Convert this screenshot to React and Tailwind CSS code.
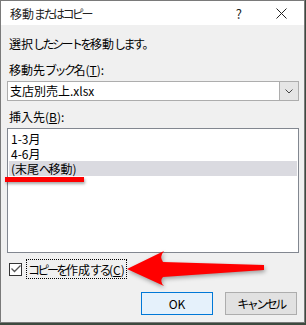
function J({ t }) {
  const parts = [];
  let buf = '';
  let kind = null;
  const kindOf = (c) => (c === '。' ? 'p' : /[\u3040-\u30ff]/.test(c) ? 'k' : 'o');
  for (const c of t) {
    const k = kindOf(c);
    if (k !== kind && buf) {
      parts.push([kind, buf]);
      buf = '';
    }
    kind = k;
    buf += c;
  }
  if (buf) parts.push([kind, buf]);
  return (
    <>
      {parts.map(([k, s], i) =>
        k === 'k' ? (
          <span key={i} className="tracking-[-2.5px]">{s}</span>
        ) : k === 'p' ? (
          <span key={i} className="tracking-[-4px]">{s}</span>
        ) : (
          <span key={i}>{s}</span>
        )
      )}
    </>
  );
}

export default function App() {
  const font = { fontFamily: '"Noto Sans CJK JP", "Noto Sans", sans-serif' };
  return (
    <div className="relative w-[306px] h-[325px] bg-[#3d4a3f] overflow-hidden" style={font}>
      <div className="w-[305px] h-[323px] border border-[#7a7a7a] bg-[#f0f0f0] flex flex-col text-[12px] text-black leading-[15px]">
        {/* title bar */}
        <div className="h-[24px] bg-white flex items-center pl-[9px] pr-[13px] shrink-0">
          <span className="text-[12px] text-[#222]"><J t="移動またはコピー" /></span>
          <span className="ml-auto text-[13px] text-[#222] mr-[34px]">?</span>
          <svg width="11" height="11" viewBox="0 0 11 11" className="mr-[4px]">
            <path d="M0.5 0.5 L10.5 10.5 M10.5 0.5 L0.5 10.5" stroke="#222" strokeWidth="1" />
          </svg>
        </div>
        {/* body */}
        <div className="flex flex-col px-[6px]">
          <div className="mt-[11px] h-[15px] pl-[2px] whitespace-nowrap"><J t="選択したシートを移動します。" /></div>
          <div className="mt-[11px] h-[15px] pl-[2px] whitespace-nowrap"><J t="移動先ブック名(" /><span className="underline">T</span>):</div>
          <div className="mt-[4px] h-[20px] w-[292px] border border-[#adadad] bg-white flex">
            <div className="flex-1 pl-[2px] text-[12px] leading-[18px]">支店別売上.xlsx</div>
            <div className="w-[19px] h-full bg-[#e5e5e5] border-l border-[#adadad] flex items-center justify-center">
              <svg width="8" height="5" viewBox="0 0 8 5">
                <path d="M0.5 0.5 L4 4 L7.5 0.5" stroke="#444" fill="none" strokeWidth="1" />
              </svg>
            </div>
          </div>
          <div className="mt-[8px] h-[15px] pl-[2px] whitespace-nowrap">挿入先(<span className="underline">B</span>):</div>
          <div className="mt-[4px] h-[125px] w-[292px] border border-[#828790] bg-white pt-[2px] px-[1px]">
            <div className="h-[15px] pl-[2px]">1-3月</div>
            <div className="h-[15px] pl-[2px]">4-6月</div>
            <div className="h-[15px] pl-[2px] bg-[#dadae0] whitespace-nowrap"><J t="(末尾へ移動)" /></div>
          </div>
          <div className="mt-[6px] flex items-center h-[20px]">
            <div className="ml-[2px] w-[13px] h-[13px] border border-[#333] bg-white flex items-center justify-center">
              <svg width="10" height="8" viewBox="0 0 10 8">
                <path d="M0.5 3.5 L3.5 6.5 L9.5 0.5" stroke="#555" fill="none" strokeWidth="1.3" />
              </svg>
            </div>
            <div className="ml-[4px] h-[20px] border border-dotted border-black px-[1px] flex items-center whitespace-nowrap">
              <J t="コピーを作成する(" /><span className="underline">C</span>)
            </div>
          </div>
          <div className="mt-[13px] flex justify-end gap-[12px] pr-[1px]">
            <div className="w-[72px] h-[23px] border border-[#0078d7] bg-[#e5f1fb] flex items-center justify-center">OK</div>
            <div className="w-[72px] h-[23px] border border-[#adadad] bg-[#e1e1e1] flex items-center justify-center whitespace-nowrap"><J t="キャンセル" /></div>
          </div>
        </div>
      </div>
      {/* red underline annotation */}
      <div className="absolute left-[5px] top-[177px] w-[79px] h-[5px] bg-[#f00] shadow-[1px_2px_3px_rgba(0,0,0,0.35)]" />
      {/* red arrow annotation */}
      <svg className="absolute left-0 top-0" width="306" height="325" viewBox="0 0 306 325" style={{ filter: 'drop-shadow(1px 2px 2px rgba(0,0,0,0.35))' }}>
        <path d="M127 269 L164 251 Q159 257 163 262 L264 265 L264 270 L163 277 Q159 281 164 286 Z" fill="#f00" />
      </svg>
    </div>
  );
}
